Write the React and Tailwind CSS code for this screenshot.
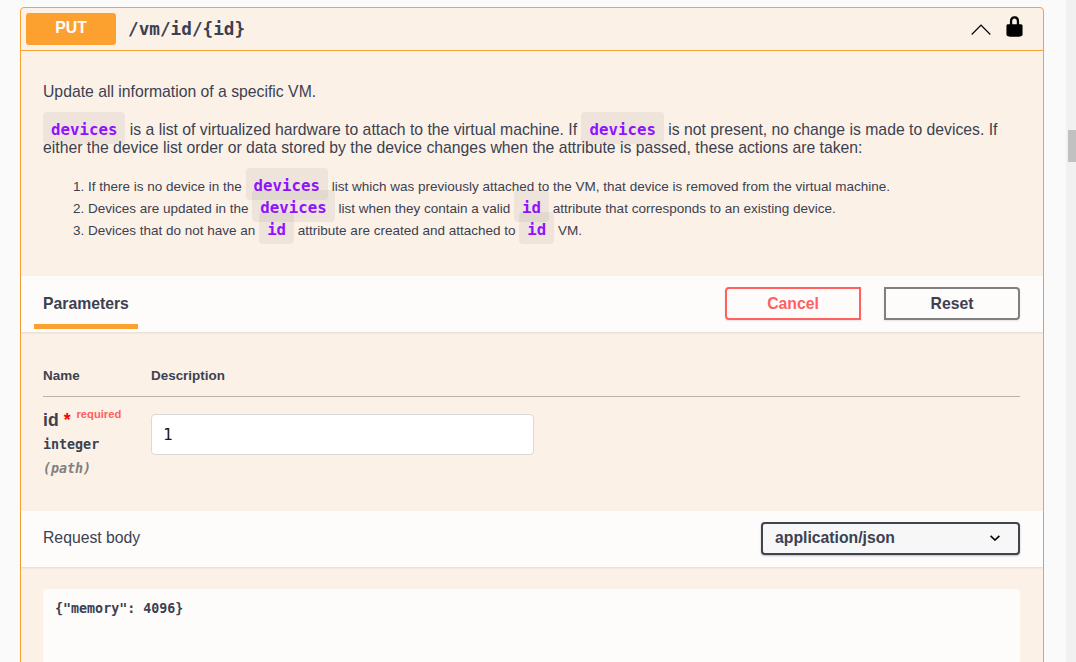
const sans = '[font-family:"Liberation_Sans",Arial,sans-serif]';

function Code({ children }) {
  return (
    <code className='rounded-[4px] bg-[rgba(0,0,0,0.05)] px-2 pt-[7.5px] pb-[5.5px] align-[1px] font-["DejaVu_Sans_Mono",monospace] text-[15.75px] leading-none font-semibold text-[#9012fe]'>
      {children}
    </code>
  );
}

function Lock() {
  return (
    <svg width="23" height="23" viewBox="0 0 20 20" fill="#000" className="-mt-[6px]">
      <path d="M15.8 8H14V5.6C14 2.703 12.665 1 10 1 7.334 1 6 2.703 6 5.6V8H4c-.553 0-1 .646-1 1.199V17c0 .549.428 1.139.951 1.307l1.197.387C5.672 18.861 6.55 19 7.1 19h5.8c.549 0 1.428-.139 1.951-.307l1.196-.387c.524-.167.953-.757.953-1.306V9.199C17 8.646 16.352 8 15.8 8zM12 8H8V5.199C8 3.754 8.797 3 10 3s2 .754 2 2.199V8z" />
    </svg>
  );
}

export default function App() {
  return (
    <div className={`flex h-screen overflow-hidden bg-[#fafafa] text-[#3b4151] ${sans}`}>
      <div className="min-w-0 flex-1 pt-[7px] pr-[22px] pl-[20px]">
        <div className="rounded-[4px] border border-[#fca130] bg-[#fbf1e7]">
          {/* summary */}
          <div className="flex h-[43px] items-center border-b border-[#fca130] pr-[17px] pl-[5px]">
            <div className="flex h-8 w-[90px] items-center justify-center rounded-[3px] bg-[#fca130] pb-[2px] text-[15.75px] font-bold text-white">PUT</div>
            <div className='ml-[12px] flex-1 font-["DejaVu_Sans_Mono",monospace] text-[17.7px] font-semibold'>/vm/id/{'{id}'}</div>
            <svg width="24" height="24" viewBox="0 0 20 20" className="mr-[10px]" fill="#000">
              <path d="M17.418 14.908 10 7.47l-7.418 7.438-.664-.662L10 6.13l8.082 8.116z" />
            </svg>
            <Lock />
          </div>

          {/* description */}
          <div className="px-[22px] pt-[32px] pb-[34px] text-[15.75px] leading-[18px]">
            <p>Update all information of a specific VM.</p>
            <p className="mt-5">
              <Code>devices</Code> is a list of virtualized hardware to attach to the virtual machine. If <Code>devices</Code> is not present, no change is made to devices. If either the device list order or data stored by the device changes when the attribute is passed, these actions are taken:
            </p>
            <ol className="mt-[19px] list-decimal pl-[45px] text-[13.5px] leading-[22px]">
              <li>If there is no device in the <Code>devices</Code> list which was previously attached to the VM, that device is removed from the virtual machine.</li>
              <li>Devices are updated in the <Code>devices</Code> list when they contain a valid <Code>id</Code> attribute that corresponds to an existing device.</li>
              <li>Devices that do not have an <Code>id</Code> attribute are created and attached to <Code>id</Code> VM.</li>
            </ol>
          </div>

          {/* parameters header */}
          <div className="flex h-[56px] items-center justify-between bg-[#fefcfb] pr-[23px] pl-[13px] shadow-[0_1px_2px_rgba(0,0,0,0.1)]">
            <div className="flex h-[53px] w-[104px] items-center self-start border-b-[5px] border-[#fca130] pt-[8px] pl-[9px] text-[15.75px] font-bold">Parameters</div>
            <div className="flex gap-[23px] pb-[1px]">
              <button className="h-[33px] w-[136px] rounded-l-[4px] border-2 border-[#ff6060] text-[15.75px] font-bold text-[#ff6060] shadow-[0_1px_2px_rgba(0,0,0,0.1)]">Cancel</button>
              <button className="h-[33px] w-[136px] rounded-r-[4px] border-2 border-[#808080] text-[15.75px] font-bold shadow-[0_1px_2px_rgba(0,0,0,0.1)]">Reset</button>
            </div>
          </div>

          {/* parameters table */}
          <div className="px-[22px] pt-[34px] pr-[23px] pb-[32px]">
            <div className="flex h-[31px] items-start border-b border-[#b8b2ab] text-[13.44px] font-bold">
              <div className="w-[108px]">Name</div>
              <div>Description</div>
            </div>
            <div className="flex pt-[13px]">
              <div className="w-[108px]">
                <div className="flex items-start text-[17.6px] font-bold">
                  <span className="leading-[20px]">id</span>
                  <span className="ml-[5px] leading-[20px] text-[#ff0000]">*</span>
                  <span className="ml-[6px] text-[11.2px] leading-[9px] text-[#ff6060]">required</span>
                </div>
                <div className='mt-[5px] font-["DejaVu_Sans_Mono",monospace] text-[13.33px] leading-[20px] font-semibold'>integer</div>
                <div className='mt-1 font-["DejaVu_Sans_Mono",monospace] text-[13.33px] leading-[20px] font-semibold text-[#808080] italic'>(path)</div>
              </div>
              <div className='mt-1 flex h-[41px] w-[383px] items-center rounded-[4px] border border-[#d9d9d9] bg-white pl-[11px] font-["DejaVu_Sans_Mono",monospace] text-[16px] text-[#1a1a1a]'>1</div>
            </div>
          </div>

          {/* request body header */}
          <div className="flex h-[56px] items-center justify-between bg-[#fefcfb] pr-[23px] pl-[22px] pb-[2px] text-[15.75px] shadow-[0_1px_2px_rgba(0,0,0,0.1)]">
            <div>Request body</div>
            <div className="flex h-[33px] w-[259px] items-center justify-between rounded-[4px] border-2 border-[#41444e] bg-[#f7f7f7] pr-[18px] pl-[12px] font-bold shadow-[0_1px_2px_rgba(0,0,0,0.25)]">
              <span className="-mt-[1px]">application/json</span>
              <svg width="10" height="6" viewBox="0 0 10 6" fill="none" stroke="#000" strokeWidth="1.6">
                <path d="M0.6 0.8 5 5 9.4 0.8" />
              </svg>
            </div>
          </div>

          {/* body */}
          <div className="px-[22px] pt-[22px] pr-[23px]">
            <div className='h-[200px] rounded-[4px] bg-[#fefcfa] pt-[12px] pl-[12px] font-["DejaVu_Sans_Mono",monospace] text-[13.33px] leading-[16px] font-semibold'>{'{"memory": 4096}'}</div>
          </div>
        </div>
      </div>

      {/* page scrollbar */}
      <div className="w-[10px] shrink-0 bg-[#f1f1f1] pt-[130px] pl-[2px]">
        <div className="h-[32px] bg-[#c1c1c1]"></div>
      </div>
    </div>
  );
}
